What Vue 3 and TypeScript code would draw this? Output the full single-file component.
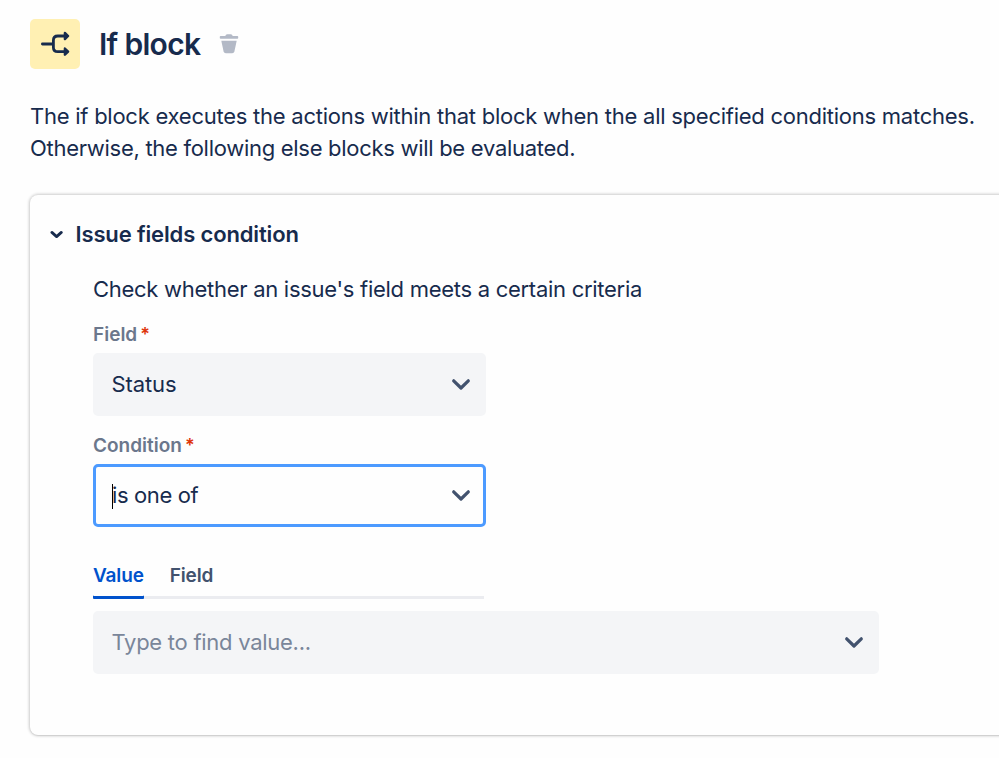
<script setup lang="ts">
import { ref } from 'vue'

interface SelectField {
  id: string
  label: string
  value: string
  focused: boolean
}

const fields: SelectField[] = [
  { id: 'status', label: 'Field', value: 'Status', focused: false },
  { id: 'operator', label: 'Condition', value: 'is one of', focused: true },
]
const tabs = ['Value', 'Field']
const activeTab = ref('Value')
</script>

<template>
  <main class="page">
    <header class="header">
      <div class="badge">
        <svg width="50" height="50" viewBox="0 0 50 50" fill="none" stroke="#172b4d" stroke-width="2.8" stroke-linecap="round" stroke-linejoin="round">
          <path d="M12.4 25H23.3M35.5 17H27.8Q23.4 17 23.4 21.2V28.4Q23.4 32.6 27.8 32.6H35.5" />
          <path d="M34.9 13.9 38.1 17 34.9 20.1ZM34.9 29.5 38.1 32.6 34.9 35.7Z" fill="#172b4d" stroke-width="2.4" />
        </svg>
      </div>
      <h1 class="title">If block</h1>
      <svg class="trash" width="20" height="20" viewBox="0 0 20 20" fill="#b3b9c6">
        <path d="M1.6 2H6.3Q6.7 0.2 8.2 0.2H11.8Q13.3 0.2 13.7 2H18.4Q19.2 2 19.2 2.8V4.1Q19.2 4.8 18.4 4.8H1.6Q.8 4.8.8 4.1V2.8Q.8 2 1.6 2Z" />
        <path d="M2.3 6.8H17.7L15.4 17.4Q15 19.2 13.2 19.2H6.8Q5 19.2 4.6 17.4Z" />
      </svg>
    </header>

    <p class="intro">
      <span class="line">The if block executes the actions within that block when the all specified conditions matches.</span>
      <span class="line second">Otherwise, the following else blocks will be evaluated.</span>
    </p>

    <section class="card">
      <div class="card-head">
        <svg width="14" height="10" viewBox="0 0 14 10" fill="none" stroke="#172b4d" stroke-width="2.8" stroke-linecap="round" stroke-linejoin="round">
          <path d="M1.9 3.4 6.6 7.6 11.3 3.4" />
        </svg>
        <h2>Issue fields condition</h2>
      </div>

      <div class="card-body">
        <p class="description">Check whether an issue's field meets a certain criteria</p>

        <div v-for="field in fields" :key="field.id" class="field">
          <div class="label"><span>{{ field.label }}</span><span class="required">*</span></div>
          <div class="select" :class="{ focused: field.focused }">
            <i v-if="field.focused" class="caret"></i>
            <span class="text">{{ field.value }}</span>
            <svg width="20" height="14" viewBox="0 0 20 14" fill="none" stroke="#42526e" stroke-width="3.2" stroke-linecap="round" stroke-linejoin="round">
              <path d="M2.7 2.8 10 10 17.3 2.8" />
            </svg>
          </div>
        </div>

        <nav class="tabs">
          <button v-for="tab in tabs" :key="tab" class="tab" :class="{ active: tab === activeTab }" type="button" @click="activeTab = tab">{{ tab }}</button>
        </nav>

        <div class="select wide">
          <span class="text placeholder">Type to find value...</span>
          <svg width="20" height="14" viewBox="0 0 20 14" fill="none" stroke="#42526e" stroke-width="3.2" stroke-linecap="round" stroke-linejoin="round">
            <path d="M2.7 2.8 10 10 17.3 2.8" />
          </svg>
        </div>
      </div>
    </section>
  </main>
</template>

<style>
html,
body {
  background: #fefefe;
  overflow: hidden;
}
</style>

<style scoped>
.page {
  box-sizing: border-box;
  width: 999px;
  height: 758px;
  padding: 19px 0 0 30px;
  overflow: hidden;
  color: #172b4d;
  font-family: Inter, "Liberation Sans", sans-serif;
  font-size: 22px;
}
.header {
  display: flex;
  align-items: center;
  height: 50px;
}
.badge {
  width: 50px;
  height: 50px;
  border-radius: 5px;
  background: #fff0b3;
}
.badge svg,
.select svg,
.card-head svg {
  display: block;
}
.title {
  width: 120px;
  margin: 0 0 0 19px;
  font-size: 30px;
  font-weight: 560;
  line-height: 40px;
  letter-spacing: -0.7px;
  white-space: nowrap;
}
.trash {
  display: block;
}
.intro {
  margin: 32px 0 0;
}
.line {
  display: block;
  line-height: 31px;
  letter-spacing: -0.25px;
  white-space: nowrap;
}
.line.second {
  padding-top: 1px;
  letter-spacing: -0.29px;
}
.card {
  box-sizing: border-box;
  width: 990px;
  height: 540px;
  margin-top: 31px;
  padding: 19px 0 0 20px;
  border-radius: 8px;
  background: #fefefe;
  box-shadow: 0 1px 1px rgba(0, 0, 0, 0.06), 0 0 3px 1px rgba(0, 0, 0, 0.2);
}
.card-head {
  display: flex;
  align-items: center;
  gap: 11.5px;
  height: 40px;
}
h2 {
  margin: 0;
  font-size: 22px;
  font-weight: 600;
  line-height: 40px;
  letter-spacing: -0.14px;
  white-space: nowrap;
}
.card-body {
  padding-left: 43px;
}
.description {
  margin: 20px 0 0;
  line-height: 31px;
  letter-spacing: -0.28px;
}
.field {
  width: 393px;
}
.label {
  display: flex;
  gap: 4px;
  height: 24px;
  margin: 18px 0 6px;
  color: #6b778c;
  font-size: 19px;
  font-weight: 600;
  line-height: 24px;
}
.required {
  margin-left: -1px;
  color: #de350b;
  font-size: 18px;
}
.select {
  position: relative;
  box-sizing: border-box;
  display: flex;
  align-items: center;
  justify-content: space-between;
  height: 63px;
  padding: 0 15px 0 18.5px;
  border-radius: 5px;
  background: #f4f5f7;
}
.select.focused {
  padding: 0 12px 0 16px;
  border: 3px solid #4c9aff;
  background: #fefefe;
}
.text {
  padding-bottom: 1px;
  letter-spacing: -0.1px;
}
.focused .text {
  letter-spacing: -0.38px;
}
.caret {
  position: absolute;
  left: 16px;
  top: 17px;
  width: 1px;
  height: 25px;
  background: #000;
}
.text.placeholder {
  color: #7a869a;
  letter-spacing: -0.27px;
}
.tabs {
  box-sizing: border-box;
  display: flex;
  gap: 26px;
  width: 391px;
  height: 38px;
  margin-top: 34px;
  box-shadow: inset 0 -3px #ebecf0;
}
.tab {
  padding: 1px 0 9px;
  border: 0;
  border-radius: 1px;
  background: none;
  color: #42526e;
  font: 600 19px/28px Inter, "Liberation Sans", sans-serif;
  letter-spacing: -0.15px;
}
.tab.active {
  color: #0052cc;
  box-shadow: inset 0 -3px #0052cc;
}
.wide {
  width: 786px;
  margin-top: 12px;
}
</style>
